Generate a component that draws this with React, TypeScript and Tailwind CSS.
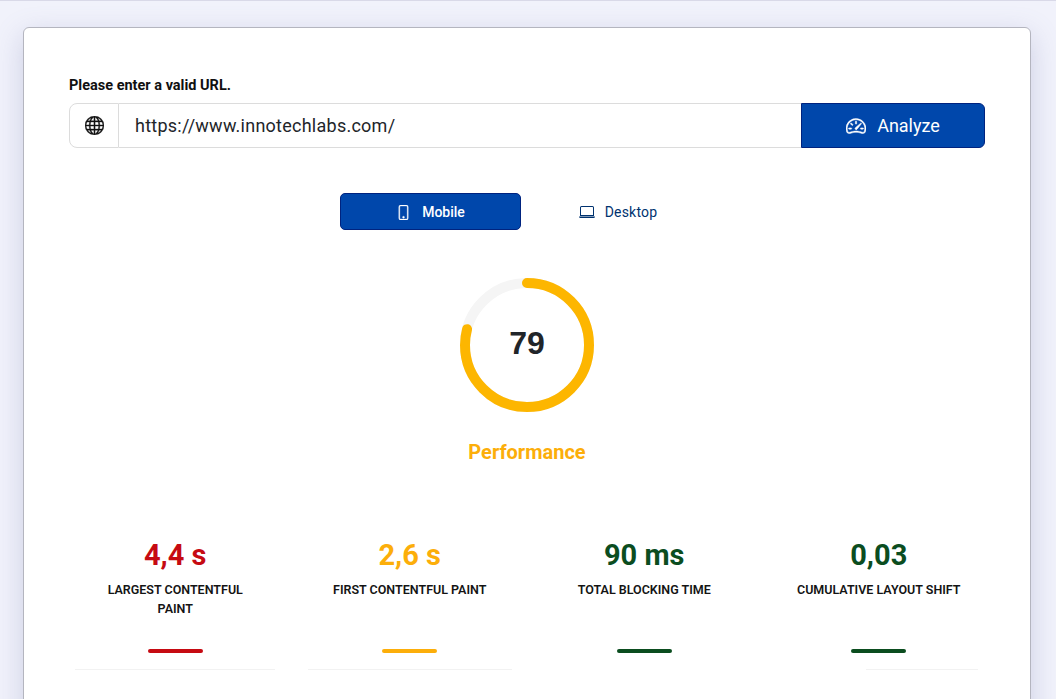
import React from "react";
import { BsGlobe, BsLaptop, BsPhone, BsSpeedometer2 } from "react-icons/bs";

const METRICS = [
  { value: "4,4 s", label: "Largest Contentful Paint", text: "text-[#c60a12]", bar: "bg-[#c60a12]", line: "w-[200px] self-center" },
  { value: "2,6 s", label: "First Contentful Paint", text: "text-[#fcae0a]", bar: "bg-[#fcae0a]", line: "w-[204px] self-center" },
  { value: "90 ms", label: "Total Blocking Time", text: "text-[#0b4d1f]", bar: "bg-[#0b4d1f]", line: "w-[204px] self-center opacity-0" },
  { value: "0,03", label: "Cumulative Layout Shift", text: "text-[#0b4d1f]", bar: "bg-[#0b4d1f]", line: "w-[112px] self-end mr-[18px]" },
];

function Gauge() {
  const r = 62;
  const circumference = 2 * Math.PI * r;
  return (
    <div className="relative w-[134px] h-[134px]">
      <svg width="134" height="134" viewBox="0 0 134 134" className="-rotate-90">
        <circle cx="67" cy="67" r={r} fill="none" stroke="#f5f5f5" strokeWidth="10" />
        <circle
          cx="67"
          cy="67"
          r={r}
          fill="none"
          stroke="#fdb600"
          strokeWidth="10"
          strokeLinecap="round"
          strokeDasharray={`${circumference * 0.79} ${circumference}`}
        />
      </svg>
      <div className="absolute inset-0 flex items-center justify-center pb-1 font-['Liberation_Sans',sans-serif] text-[32px] font-bold text-[#212529]">
        79
      </div>
    </div>
  );
}

function App() {
  return (
    <div className="h-[699px] overflow-hidden bg-[#f1f2fb] border-t border-[#d9d9e8] pt-[26px] pl-[23px] pr-[25px] font-['Roboto',sans-serif]">
      <div className="h-[720px] bg-white rounded-[6px] border border-[#b4b5bf] shadow-[0_8px_28px_rgba(120,125,175,0.3)] pl-[45px] pr-[45px] pt-[48px]">
        <label className="block text-[14.5px] leading-[20px] font-bold text-[#101010]">Please enter a valid URL.</label>
        <div className="flex h-[45px] mt-[7px]">
          <div className="w-[50px] flex items-center justify-center border border-[#dcdcdc] rounded-l-[8px] text-[#111]">
            <BsGlobe className="w-[19px] h-[19px]" strokeWidth={0.3} />
          </div>
          <div className="flex-1 flex items-center pl-[16px] border-y border-[#dcdcdc] text-[18px] tracking-[0.25px] text-[#22252a]">
            https://www.innotechlabs.com/
          </div>
          <button className="w-[184px] flex items-center justify-center gap-[11px] bg-[#0047ab] border border-[#00237f] rounded-r-[6px] text-[18px] text-white">
            <BsSpeedometer2 className="w-[20px] h-[20px]" strokeWidth={0.4} />
            Analyze
          </button>
        </div>

        <div className="flex mt-[45px] ml-[271px] gap-[7px]">
          <button className="w-[181px] h-[37px] flex items-center justify-center gap-[11px] pt-px bg-[#0047ab] border border-[#00237f] rounded-[5px] text-[14px] font-medium text-white">
            <BsPhone className="w-[15px] h-[15px]" strokeWidth={0.4} />
            Mobile
          </button>
          <button className="w-[180px] h-[37px] flex items-center justify-center gap-[10px] pt-px text-[14px] tracking-[0.2px] text-[#00326f]">
            <BsLaptop className="w-[16px] h-[16px]" />
            Desktop
          </button>
        </div>

        <div className="flex flex-col items-center mt-[48px]">
          <Gauge />
          <div className="mt-[25px] text-[20px] leading-[30px] font-bold text-[#fcae0a]">Performance</div>
        </div>

        <div className="grid grid-cols-4 w-[938px] -ml-[11px] mt-[71px]">
          {METRICS.map((m) => (
            <div key={m.label} className="flex flex-col items-center">
              <div className={`text-[29px] leading-[34px] font-bold ${m.text}`}>{m.value}</div>
              <div className="mt-[8px] w-[170px] h-[58px] text-center text-[12.5px] leading-[19px] font-semibold uppercase text-[#141414]">
                {m.label}
              </div>
              <div className={`mt-[11px] w-[55px] h-[4px] rounded-full ${m.bar}`} />
              <div className={`mt-[16px] h-px bg-[#f2f2f2] ${m.line}`} />
            </div>
          ))}
        </div>
      </div>
    </div>
  );
}

export default App;
